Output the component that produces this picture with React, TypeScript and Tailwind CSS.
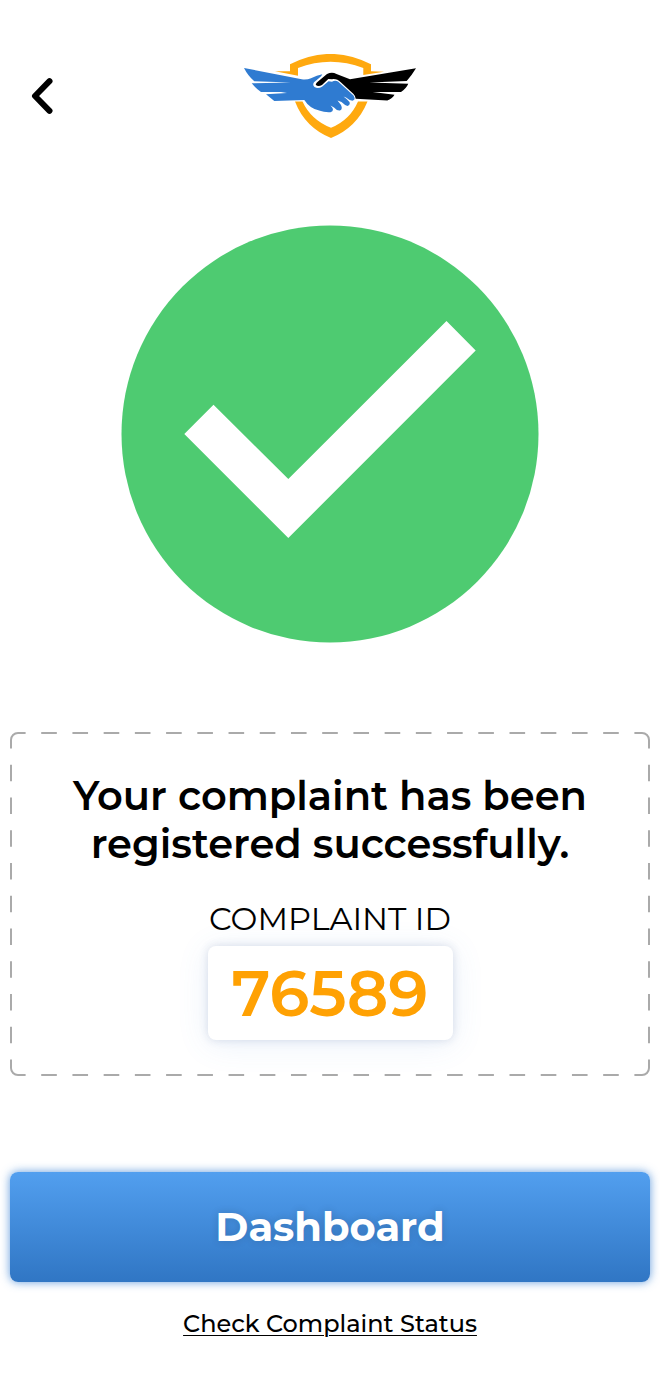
import React from "react";

function BackIcon() {
  return (
    <svg viewBox="0 0 22 36" className="h-9 w-[22px]" fill="none" stroke="#000" strokeWidth="6" strokeLinecap="round" strokeLinejoin="round" aria-hidden="true">
      <path d="M18.5 3.2 4 18 18.5 32.8" />
    </svg>
  );
}

function Logo() {
  return (
    <svg viewBox="0 0 172 84" className="h-[84px] w-[172px]" role="img" aria-label="Handshake shield">
      <g fill="#ffa90f">
        <path d="M46 10.3Q86.500-10.500 127 10.300V17.300L140 17.700 119.300 21V14Q86.500 1.500 54 14V21.700L31 17.300H46Z" />
        <path d="M51 47.500H58.500Q67 66 87 73.800Q106 66 114 47.500H123.500Q113 73.500 87 84Q61 73.500 51 47.500Z" />
      </g>
      <path
        fill="#2f7bd1"
        d="M0 14 57.700 25.300Q63 26 67 24.200Q73 21.500 78.300 20.300Q77.500 22.300 76 23.300L70 28.300Q68.200 31 70.500 33Q74 35 78 32.700L84.500 27.300 88 27.800Q91 26 94 27.600L109.500 41.500Q112 45.500 109 46.600Q106 47 102 43.500L99.500 42.500Q103 45 105.500 48Q106.500 51.500 103.500 51.900Q101 51.500 97.500 48L93.500 46.500 97 51Q99 55.500 96 56.500Q93 57 90 53.500L86.500 51.500 88.500 54Q90 57.500 86.500 58.200Q80 58.500 76 56.800Q66 55 60.300 46L30.300 46.900 22 40.300 43 39 37 37.900H17Q12 34.500 7.700 29.300L47 28.600 10.300 27.200Q4 22 0 14Z"
      />
      <path
        fill="#000"
        d="M172 14.300Q168 21 162.700 26.900L125.300 28.500 164.300 29.800Q162 35 157 37.900L128.700 37.900 150.500 40.800Q148 45 143.300 46.400L111.700 44.700Q111.500 42 109.500 40L97 28.500Q93 24.500 88 25.200L84.300 25 78 31Q74 33.200 71.700 30.700Q72 29 74 27.500L83 20Q88 17.500 92.500 20L106 25.300Z"
      />
    </svg>
  );
}

function DashedFrame() {
  return (
    <svg className="pointer-events-none absolute inset-0 size-full" aria-hidden="true">
      <mask id="dashes" maskUnits="userSpaceOnUse" x="0" y="0" width="100%" height="100%">
        <g stroke="#fff" strokeWidth="16" strokeDasharray="1 1">
          <line x1="0" y1="0" x2="100%" y2="0" pathLength={41} />
          <line x1="0" y1="100%" x2="100%" y2="100%" pathLength={41} />
          <line x1="0" y1="0" x2="0" y2="100%" pathLength={21} />
          <line x1="100%" y1="0" x2="100%" y2="100%" pathLength={21} />
        </g>
      </mask>
      <g mask="url(#dashes)">
        <rect x="1" y="1" rx="7" fill="none" stroke="#aaa" strokeWidth="2" className="h-[calc(100%-2px)] w-[calc(100%-2px)]" />
      </g>
    </svg>
  );
}

export default function App() {
  return (
    <div className="min-h-screen bg-white px-[10px] font-['Montserrat','Inter',sans-serif] text-black">
      <header className="grid grid-cols-[1fr_auto_1fr] items-center pt-[54px]">
        <button type="button" aria-label="Back" className="ml-[21px] justify-self-start">
          <BackIcon />
        </button>
        <Logo />
      </header>

      <main>
        <svg viewBox="0 0 418 418" className="mx-auto mt-[87px] h-[418px] max-w-full" role="img" aria-label="Success">
          <circle cx="209" cy="209" r="208.500" fill="#4ecb71" />
          <path fill="#fff" d="M63.300 209 92.500 179.700 167.300 254 325.500 96 354.700 125.500 167.300 313Z" />
        </svg>

        <section className="relative mt-[89px] flex flex-col items-center px-4 pt-10 pb-9 text-center">
          <DashedFrame />
          <h1 className="max-w-[560px] text-[40px] leading-[48px] font-semibold">
            Your complaint has been registered successfully.
          </h1>
          <p className="mt-8 text-[32px] leading-[38px] font-normal">COMPLAINT ID</p>
          <output className="mt-2 rounded-lg bg-white px-6 py-[15px] text-[64px] leading-[64px] font-semibold text-[#ffa103] shadow-[0_0_10px_rgba(40,60,120,0.16),0_4px_32px_rgba(80,140,220,0.12)]">
            76589
          </output>
        </section>

        <button
          type="button"
          className="mt-24 block h-[110px] w-full rounded-lg bg-linear-to-b from-[#529fef] to-[#3076c4] text-[40px] leading-[48px] font-bold text-white shadow-[0_0_10px_rgba(47,123,209,0.75)] [text-shadow:0_0_8px_rgba(0,0,0,0.15)]"
        >
          Dashboard
        </button>
        <div className="flex justify-center pt-6 pb-9">
          <a href="#status" className="text-2xl leading-9 font-medium underline decoration-1 underline-offset-[3px]">
            Check Complaint Status
          </a>
        </div>
      </main>
    </div>
  );
}
